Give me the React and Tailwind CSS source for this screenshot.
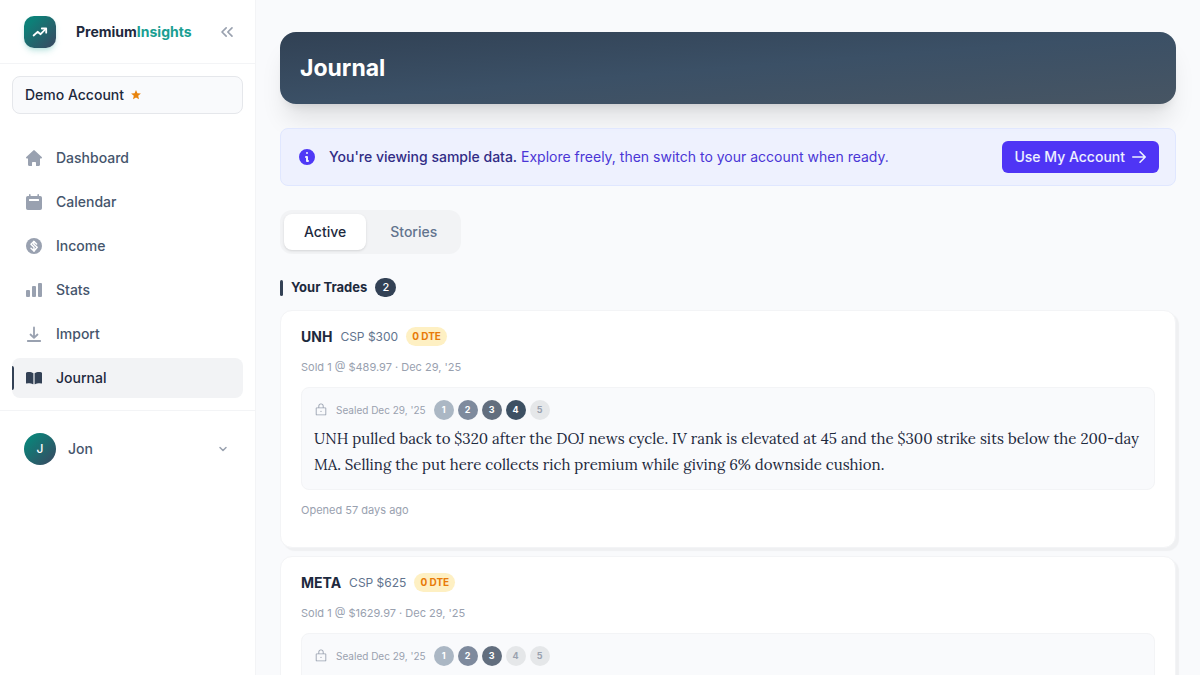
import React, { useState } from 'react'
import { ChevronDown, ChevronsLeft } from 'lucide-react'
import { HiInformationCircle } from 'react-icons/hi'
import { PiLock } from 'react-icons/pi'

const HomeIcon = () => (
  <svg viewBox="0 0 16 16" className="h-4 w-4" fill="currentColor">
    <path d="M7.3.4a1 1 0 0 1 1.4 0l7 6.7c.6.6.2 1.5-.6 1.5H14v6.2c0 .7-.5 1.2-1.2 1.2h-2.3a.5.5 0 0 1-.5-.5V12.800a.8.8 0 0 0-.8-.8H6.8a.8.8 0 0 0-.8.8v2.700a.5.5 0 0 1-.5.5H3.200C2.500 16 2 15.500 2 14.800V8.600H.9c-.8 0-1.200-.9-.6-1.500z" />
  </svg>
)

const CalendarIcon = () => (
  <svg viewBox="0 0 16 16" className="h-4 w-4" fill="currentColor">
    <path
      fillRule="evenodd"
      d="M3 .8a.8.8 0 0 1 1.600 0V2h6.800V.8a.8.8 0 0 1 1.600 0V2h1.200A1.800 1.800 0 0 1 16 3.800v10.400a1.800 1.800 0 0 1-1.800 1.800H1.800A1.800 1.800 0 0 1 0 14.200V3.800A1.800 1.800 0 0 1 1.800 2H3zM3.500 5a.5.5 0 0 0-.5.5v1a.5.5 0 0 0 .5.5h9a.5.5 0 0 0 .5-.5v-1a.5.5 0 0 0-.5-.5z"
    />
  </svg>
)

const IncomeIcon = () => (
  <svg viewBox="0 0 16 16" className="h-4 w-4">
    <circle cx="8" cy="8" r="8" fill="currentColor" />
    <g fill="none" stroke="white" strokeWidth="1.500" strokeLinecap="round" strokeLinejoin="round">
      <path d="M7.800 3.500 5 6.200 8 9.300V13L5 10.300" />
      <path d="M7.800 3.500V6.200L11.200 9.200 8 13" />
      <path d="M8 3.500 10.600 6" />
    </g>
  </svg>
)

const StatsIcon = () => (
  <svg viewBox="0 0 16 16" className="h-4 w-4" fill="currentColor">
    <rect x="0" y="8" width="4" height="7" rx="1" />
    <rect x="6" y="4" width="4" height="11" rx="1" />
    <rect x="12" y="1" width="4" height="14" rx="1" />
  </svg>
)

const ImportIcon = () => (
  <svg viewBox="0 0 16 16" className="h-4 w-4" fill="none" stroke="currentColor" strokeWidth="1.800" strokeLinecap="round" strokeLinejoin="round">
    <path d="M8 1.500v10M4.500 8.500 8 11.800l3.500-3.300M1.800 15h12.400" />
  </svg>
)

const JournalIcon = () => (
  <svg viewBox="0 0 16 16" className="h-4 w-4" fill="currentColor">
    <path d="M7.400 3.300C6.200 2.400 4.700 2 3 2 2 2 1.200 2.100.4 2.400a.6.6 0 0 0-.4.600v9.900c0 .4.400.7.800.6C2.700 13 5 12.900 6.500 13.900c.3.200.6.300.9.300z" />
    <path d="M8.600 3.300C9.800 2.400 11.300 2 13 2c1 0 1.800.1 2.600.4.300.1.400.3.400.6v9.900c0 .4-.4.700-.8.600-1.900-.5-4.200-.6-5.700.4-.3.200-.6.300-.9.300z" />
  </svg>
)

const StarIcon = () => (
  <svg viewBox="0 0 10 10" className="h-[10px] w-[10px] text-[#e8830c]" fill="currentColor">
    <path d="M5 0 6.400 3.200l3.500.3-2.700 2.300.8 3.500L5 7.500 2 9.300l.8-3.500L.1 3.500l3.500-.3z" />
  </svg>
)

const LogoMark = () => (
  <svg viewBox="0 0 16 16" className="h-4 w-4" fill="none" stroke="currentColor" strokeWidth="1.800" strokeLinecap="round" strokeLinejoin="round">
    <path d="M1.600 11.500 5.600 7.800 8.600 10.200 13.600 5" />
    <path d="M9.800 4.500h4.400v4.200" />
  </svg>
)

const ArrowIcon = () => (
  <svg viewBox="0 0 16 16" className="h-4 w-4" fill="none" stroke="currentColor" strokeWidth="1.600" strokeLinecap="round" strokeLinejoin="round">
    <path d="M1.800 8h12M9 2.800 14.200 8 9 13.200" />
  </svg>
)

const navItems = [
  { label: 'Dashboard', icon: HomeIcon },
  { label: 'Calendar', icon: CalendarIcon },
  { label: 'Income', icon: IncomeIcon },
  { label: 'Stats', icon: StatsIcon },
  { label: 'Import', icon: ImportIcon },
  { label: 'Journal', icon: JournalIcon, active: true },
]

const trades = [
  {
    ticker: 'UNH',
    position: 'CSP $300',
    sold: "Sold 1 @ $489.97 · Dec 29, '25",
    confidence: 4,
    note: 'UNH pulled back to $320 after the DOJ news cycle. IV rank is elevated at 45 and the $300 strike sits below the 200-day MA. Selling the put here collects rich premium while giving 6% downside cushion.',
    opened: 'Opened 57 days ago',
  },
  {
    ticker: 'META',
    position: 'CSP $625',
    sold: "Sold 1 @ $1629.97 · Dec 29, '25",
    confidence: 3,
  },
]

const levelColors = ['bg-[#abb7c4]', 'bg-[#7e8a9d]', 'bg-[#626e7e]', 'bg-[#3d5063]', 'bg-[#334155]']

const Sidebar = () => (
  <aside className="w-64 shrink-0 border-r border-gray-100 bg-white">
    <div className="flex h-16 items-center border-b border-gray-100 pr-[18px] pl-6">
      <div className="flex h-8 w-8 items-center justify-center rounded-[10px] bg-[linear-gradient(135deg,#0d8078_20%,#3b4660)] text-white shadow-md shadow-teal-600/20">
        <LogoMark />
      </div>
      <span className="ml-5 text-sm font-bold text-slate-800">
        Premium<span className="text-[#1a9e92]">Insights</span>
      </span>
      <button aria-label="Collapse sidebar" className="ml-auto text-gray-400">
        <ChevronsLeft className="h-5 w-5" strokeWidth={2} />
      </button>
    </div>

    <div className="px-3 pt-3">
      <button className="flex h-[38px] w-full items-center gap-[7px] rounded-lg border border-gray-200 bg-[#f9fafc] px-3 text-sm font-medium text-slate-800">
        Demo Account
        <StarIcon />
      </button>
    </div>

    <nav className="flex flex-col gap-1 px-3 pt-6 pb-3">
      {navItems.map(({ label, icon: Icon, active }) => (
        <a
          key={label}
          href="#"
          className={`relative flex h-10 items-center gap-[14px] rounded-lg px-[14px] text-sm font-medium ${
            active ? 'bg-[#f2f3f5] text-slate-800' : 'text-slate-600'
          }`}
        >
          {active && <span className="absolute top-2 left-0 h-6 w-[2px] rounded-r bg-[#334155]" />}
          <span className={active ? 'text-[#334155]' : 'text-[#99a1b0]'}>
            <Icon />
          </span>
          {label}
        </a>
      ))}
    </nav>

    <div className="border-t border-gray-100 px-3 pt-[14px]">
      <button className="flex h-12 w-full items-center gap-3 px-3 text-sm font-medium text-slate-600">
        <span className="flex h-8 w-8 items-center justify-center rounded-full bg-[linear-gradient(135deg,#0d8078_20%,#3b4660)] text-xs text-white">
          J
        </span>
        Jon
        <ChevronDown className="mr-[2px] ml-auto h-3 w-3 text-gray-400" strokeWidth={3} />
      </button>
    </div>
  </aside>
)

const SampleDataBanner = () => (
  <div className="mt-6 flex items-center justify-between rounded-lg border border-indigo-100 bg-[#ecf0fe]/90 py-3 pr-4 pl-4">
    <div className="flex items-center text-sm text-[#4a36d6]">
      <HiInformationCircle className="mr-3 h-5 w-5 text-[#4f39f6]" />
      <p>
        <strong className="font-medium text-indigo-900">You're viewing sample data.</strong> Explore freely, then switch to
        your account when ready.
      </p>
    </div>
    <button className="flex h-8 items-center gap-[6px] rounded-md bg-[#4f35f5] px-3 text-sm font-medium text-indigo-50">
      Use My Account
      <ArrowIcon />
    </button>
  </div>
)

const TradeCard = ({ trade }) => (
  <article className="rounded-xl border border-gray-100 bg-white px-5 pt-4 pb-[29px] shadow-[3px_3px_1px_#eff0f2]">
    <div className="flex h-5 items-center gap-2">
      <h3 className="text-sm font-bold text-slate-800">{trade.ticker}</h3>
      <span className="text-xs text-slate-500">{trade.position}</span>
      <span className="flex h-[19px] items-center self-start rounded-full bg-[#fef0c3] px-[6px] text-[10px] font-bold text-[#e87b08]">
        0 DTE
      </span>
    </div>
    <p className="mt-3 text-[11px] leading-4 text-gray-400">{trade.sold}</p>
    <div className="mt-3 rounded-lg border border-gray-100 bg-[#f9fafc] px-3 pt-3 pb-[11px]">
      <div className="flex h-5 items-center text-[10px] text-gray-400">
        <PiLock className="mr-2 h-[14px] w-[14px]" />
        Sealed Dec 29, '25
        <div className="ml-2 flex gap-1">
          {[1, 2, 3, 4, 5].map((level) => (
            <span
              key={level}
              className={`flex h-5 w-5 items-center justify-center rounded-full text-[9px] font-bold ${
                level <= trade.confidence ? `${levelColors[level - 1]} text-white` : 'bg-[#e5e7e9] text-gray-400'
              }`}
            >
              {level}
            </span>
          ))}
        </div>
      </div>
      <p className="mt-[6px] min-h-[52px] font-['Lora','Liberation_Serif',serif] text-[15px] leading-[26px] text-slate-800">
        {trade.note}
      </p>
    </div>
    {trade.opened && <p className="mt-3 text-[11px] leading-4 text-gray-400">{trade.opened}</p>}
  </article>
)

export default function App() {
  const [tab, setTab] = useState('Active')

  return (
    <div className="flex h-screen overflow-hidden bg-[#f9fafc] font-['Inter',sans-serif]">
      <Sidebar />
      <main className="min-w-0 flex-1 overflow-hidden px-6 pt-8">
        <header className="rounded-2xl bg-[linear-gradient(to_bottom_right,#314154,#3b5066_50%,#475563)] px-5 py-5 shadow-xl">
          <h1 className="text-[23px] leading-8 font-bold text-white">Journal</h1>
        </header>

        <SampleDataBanner />

        <div className="mt-6 inline-flex gap-1 rounded-xl bg-[#f2f3f5] p-1">
          {['Active', 'Stories'].map((name) => (
            <button
              key={name}
              onClick={() => setTab(name)}
              className={`h-9 rounded-lg px-5 text-sm font-medium ${
                tab === name ? 'bg-white text-slate-800 shadow-sm' : 'text-slate-500'
              }`}
            >
              {name}
            </button>
          ))}
        </div>

        <section className="mt-6">
          <div className="flex h-[19px] items-center gap-2">
            <span className="h-4 w-[3px] rounded-xs bg-[#334155]" />
            <h2 className="text-[13px] font-bold text-slate-800">Your Trades</h2>
            <span className="flex h-[19px] w-[21px] items-center justify-center rounded-full bg-[#334155] text-[11px] font-medium text-white">
              2
            </span>
          </div>
          <div className="mt-[13px] flex flex-col gap-2">
            {trades.map((trade) => (
              <TradeCard key={trade.ticker} trade={trade} />
            ))}
          </div>
        </section>
      </main>
    </div>
  )
}
